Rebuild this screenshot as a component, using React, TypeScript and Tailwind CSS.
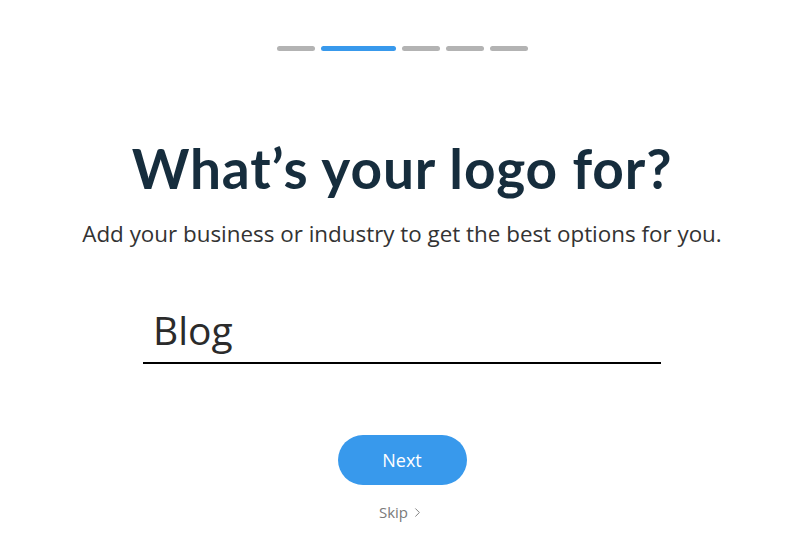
import { ChevronRight } from 'lucide-react';

const steps = [false, true, false, false, false];

export default function App() {
  return (
    <div className="min-h-[560px] w-full bg-white pl-[4px] flex flex-col items-center font-['Lato',sans-serif]">
      {/* progress */}
      <div className="flex gap-[6px] mt-[46px]">
        {steps.map((active, i) => (
          <div
            key={i}
            className={
              active
                ? 'h-[5px] w-[75px] rounded-full bg-[#3899ec]'
                : 'h-[5px] w-[38px] rounded-full bg-[#b3b3b3]'
            }
          />
        ))}
      </div>

      <h1 className="mt-[84px] text-[55px] leading-[66px] font-bold text-[#162d3d] tracking-[0.9px]">
        What’s your logo for?
      </h1>
      <p className="mt-[18px] text-[22.4px] leading-[30px] text-[#333] font-['Open_Sans',sans-serif]">
        Add your business or industry to get the best options for you.
      </p>

      <div className="mt-[57px] w-[518px] border-b-2 border-black px-[10px] pb-[8px]">
        <input
          defaultValue="Blog"
          className="w-full bg-transparent outline-none text-[39px] leading-[48px] text-[#2b2b2b] font-['Open_Sans',sans-serif]"
        />
      </div>

      <button className="mt-[71px] h-[50px] w-[129px] rounded-full bg-[#3899ec] text-white text-[18px] font-['Open_Sans',sans-serif]">
        Next
      </button>

      <button className="mt-[16px] flex items-center gap-[2px] text-[15px] text-[#7a7a7a] font-['Open_Sans',sans-serif]">
        Skip
        <ChevronRight className="w-[15px] h-[15px]" strokeWidth={1.5} />
      </button>
    </div>
  );
}
